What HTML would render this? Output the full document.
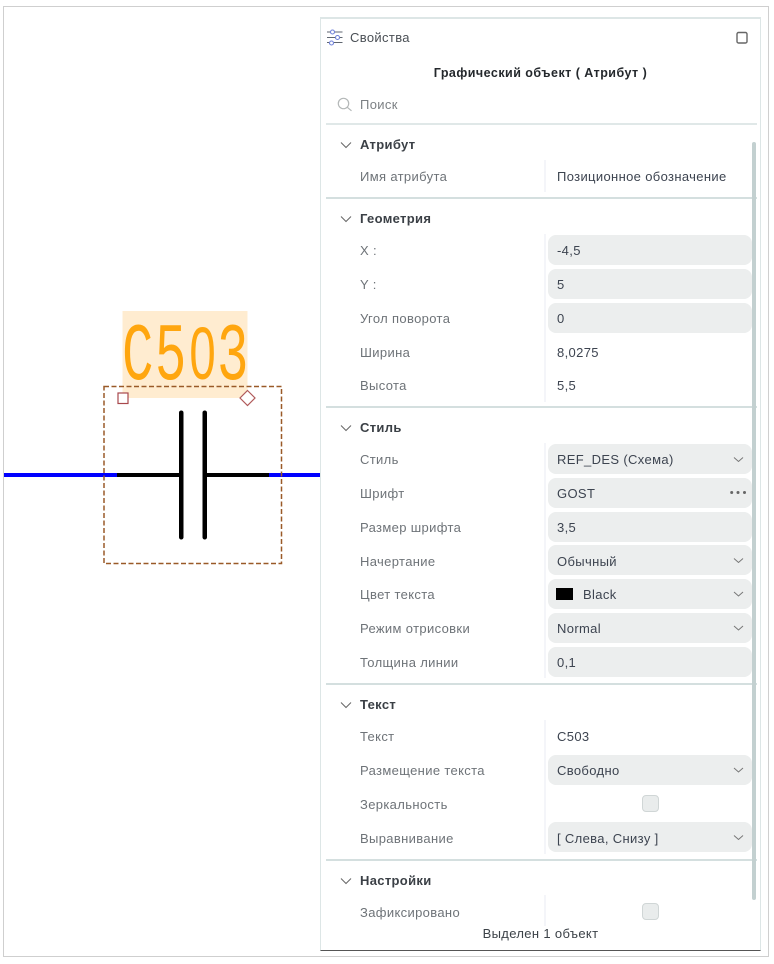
<!DOCTYPE html>
<html lang="ru"><head><meta charset="utf-8"><style>
html,body{margin:0;padding:0;background:#fff}
body{width:774px;height:964px;position:relative;overflow:hidden;font-family:"Liberation Sans",Arial,sans-serif;font-size:13px;color:#3c4248}
.a{position:absolute}
.t{position:absolute;line-height:16px;white-space:nowrap;letter-spacing:.35px}
.l{left:360px;color:#6e7378;margin-top:1px}
.v{left:557px;color:#3d4450;margin-top:1px}
.h{left:360px;font-weight:bold;color:#3b4046;letter-spacing:.33px;margin-top:1px}
.f{position:absolute;left:548px;width:204px;height:30px;background:#eceeee;border-radius:8px}
.ln{position:absolute;left:326px;width:431px;height:2px;background:#d4dfdf}
.sep{position:absolute;left:544px;width:2px;background:#f4f5f9}
.cb{position:absolute;left:642px;width:15px;height:15px;background:#e9ecec;border:1px solid #d0d6d6;border-radius:4px}
svg{position:absolute;left:0;top:0}
</style></head><body>
<div class="a" style="left:3px;top:6px;width:764px;height:949px;border:1px solid #cfcfcf"></div>
<svg width="321" height="600" viewBox="0 0 321 600">
<rect x="122.500" y="311" width="125" height="87" fill="#ffecd0"/>
<text transform="translate(0,379) scale(.64,1)" y="0" font-family="Liberation Mono" font-size="82" fill="#ffa60f"><tspan x="190.600">C</tspan><tspan x="242">5</tspan><tspan x="296" font-family="Liberation Sans" font-size="74">0</tspan><tspan x="339">3</tspan></text>
<rect x="4" y="473" width="114" height="4" fill="#0000ff"/><rect x="268" y="473" width="53" height="4" fill="#0000ff"/>
<rect x="117" y="473" width="63" height="4" fill="#000"/><rect x="205" y="473" width="64" height="4" fill="#000"/>
<rect x="179" y="410.500" width="4.500" height="129" rx="2.200" fill="#000"/><rect x="202.500" y="410.500" width="4.500" height="129" rx="2.200" fill="#000"/>
<rect x="104" y="386.500" width="177.500" height="177" fill="none" stroke="#9a5a28" stroke-width="1.500" stroke-dasharray="5 2.500"/>
<rect x="118" y="393" width="10" height="10.500" fill="#fff" stroke="#a8484c" stroke-width="1.200"/>
<path d="M247.500 390.500L255 398L247.500 405.500L240 398Z" fill="#fff" stroke="#b05a5a" stroke-width="1.200"/>
</svg>
<div class="a" style="left:320px;top:17px;width:439px;height:931px;background:#fff;border:solid #dde6e6;border-width:2px 1px 0 1px;border-bottom:1px solid #555"></div>
<svg width="774" height="964" viewBox="0 0 774 964" fill="none">
<g stroke="#5f6670" stroke-width="1"><path d="M327 32H330M335 32H342.500M327 37.500H335M340 37.500H342.500M327 42.500H329M334 42.500H342.500"/></g>
<g stroke="#6f80d8" stroke-width="1.100"><circle cx="332.500" cy="32" r="2"/><circle cx="337.500" cy="37.500" r="2"/><circle cx="331.500" cy="43" r="2"/></g>
<rect x="737" y="32.500" width="10" height="10.500" rx="1.500" stroke="#666" stroke-width="1.400"/>
<circle cx="343.500" cy="103.500" r="5.200" stroke="#b4b8b8" stroke-width="1.200"/><path d="M347.300 107.300L351.500 110.800" stroke="#b4b8b8" stroke-width="1.200"/>
<g stroke="#666" stroke-width="1">
<path d="M341 142.500L346 147.500L351 142.500M341 216.500L346 221.500L351 216.500M341 425.500L346 430.500L351 425.500M341 702.500L346 707.500L351 702.500M341 878.500L346 883.500L351 878.500"/>
</g>
</svg>
<div class="t" style="left:350px;top:30px;color:#4a4f55">Свойства</div>
<div class="t" style="left:320px;width:441px;text-align:center;top:65px;font-weight:bold;color:#24282c;font-size:12.500px;letter-spacing:.47px">Графический объект ( Атрибут )</div>
<div class="t" style="left:360px;top:97px;color:#7c8084">Поиск</div>

<div class="ln" style="top:123px;background:#e0e8e8"></div>
<div class="ln" style="top:197px"></div>
<div class="ln" style="top:406px"></div>
<div class="ln" style="top:683px"></div>
<div class="ln" style="top:858.500px"></div>

<div class="sep" style="top:160px;height:32px"></div>
<div class="sep" style="top:234px;height:168px"></div>
<div class="sep" style="top:443px;height:235px"></div>
<div class="sep" style="top:720px;height:134px"></div>
<div class="sep" style="top:895px;height:31px"></div>

<div class="f" style="top:235px"></div><div class="f" style="top:269px"></div><div class="f" style="top:303px"></div>
<div class="f" style="top:444px"></div><div class="f" style="top:478px"></div><div class="f" style="top:512px"></div><div class="f" style="top:545px"></div><div class="f" style="top:579px"></div><div class="f" style="top:613px"></div><div class="f" style="top:647px"></div>
<div class="f" style="top:755px"></div><div class="f" style="top:822px"></div>

<div class="a" style="left:752px;top:142px;width:4px;height:758px;background:#c3d0d0;border-radius:2px"></div>

<svg width="774" height="964" viewBox="0 0 774 964"><g fill="#666"><circle cx="731.700" cy="492.500" r="1.500"/><circle cx="738" cy="492.500" r="1.500"/><circle cx="744.500" cy="492.500" r="1.500"/></g>
<g stroke="#777" stroke-width="1" fill="none"><path d="M734 457.500L738.500 461.500L743 457.500M734 558.500L738.500 562.500L743 558.500M734 592L738.500 596L743 592M734 626L738.500 630L743 626M734 768L738.500 772L743 768M734 835.500L738.500 839.500L743 835.500"/></g></svg>

<div class="t h" style="top:136px">Атрибут</div>
<div class="t l" style="top:168px">Имя атрибута</div><div class="t v" style="top:168px">Позиционное обозначение</div>
<div class="t h" style="top:210px">Геометрия</div>
<div class="t l" style="top:242px">X :</div><div class="t v" style="top:242px">-4,5</div>
<div class="t l" style="top:276px">Y :</div><div class="t v" style="top:276px">5</div>
<div class="t l" style="top:310px">Угол поворота</div><div class="t v" style="top:310px">0</div>
<div class="t l" style="top:344px">Ширина</div><div class="t v" style="top:344px">8,0275</div>
<div class="t l" style="top:377px">Высота</div><div class="t v" style="top:377px">5,5</div>
<div class="t h" style="top:419px">Стиль</div>
<div class="t l" style="top:451px">Стиль</div><div class="t v" style="top:451px">REF_DES (Схема)</div>
<div class="t l" style="top:485px">Шрифт</div><div class="t v" style="top:485px">GOST</div>
<div class="t l" style="top:519px">Размер шрифта</div><div class="t v" style="top:519px">3,5</div>
<div class="t l" style="top:553px">Начертание</div><div class="t v" style="top:553px">Обычный</div>
<div class="t l" style="top:586px">Цвет текста</div><div class="a" style="left:556px;top:588px;width:17px;height:12px;background:#000"></div><div class="t v" style="left:583px;top:586px">Black</div>
<div class="t l" style="top:620px">Режим отрисовки</div><div class="t v" style="top:620px">Normal</div>
<div class="t l" style="top:654px">Толщина линии</div><div class="t v" style="top:654px">0,1</div>
<div class="t h" style="top:696px">Текст</div>
<div class="t l" style="top:728px">Текст</div><div class="t v" style="top:728px">C503</div>
<div class="t l" style="top:762px">Размещение текста</div><div class="t v" style="top:762px">Свободно</div>
<div class="t l" style="top:796px">Зеркальность</div><div class="cb" style="top:795px"></div>
<div class="t l" style="top:830px">Выравнивание</div><div class="t v" style="top:830px">[ Слева, Снизу ]</div>
<div class="t h" style="top:872px">Настройки</div>
<div class="t l" style="top:904px">Зафиксировано</div><div class="cb" style="top:903px"></div>
<div class="t" style="left:320px;width:441px;text-align:center;top:926px;color:#3c4248">Выделен 1 объект</div>
</body></html>
